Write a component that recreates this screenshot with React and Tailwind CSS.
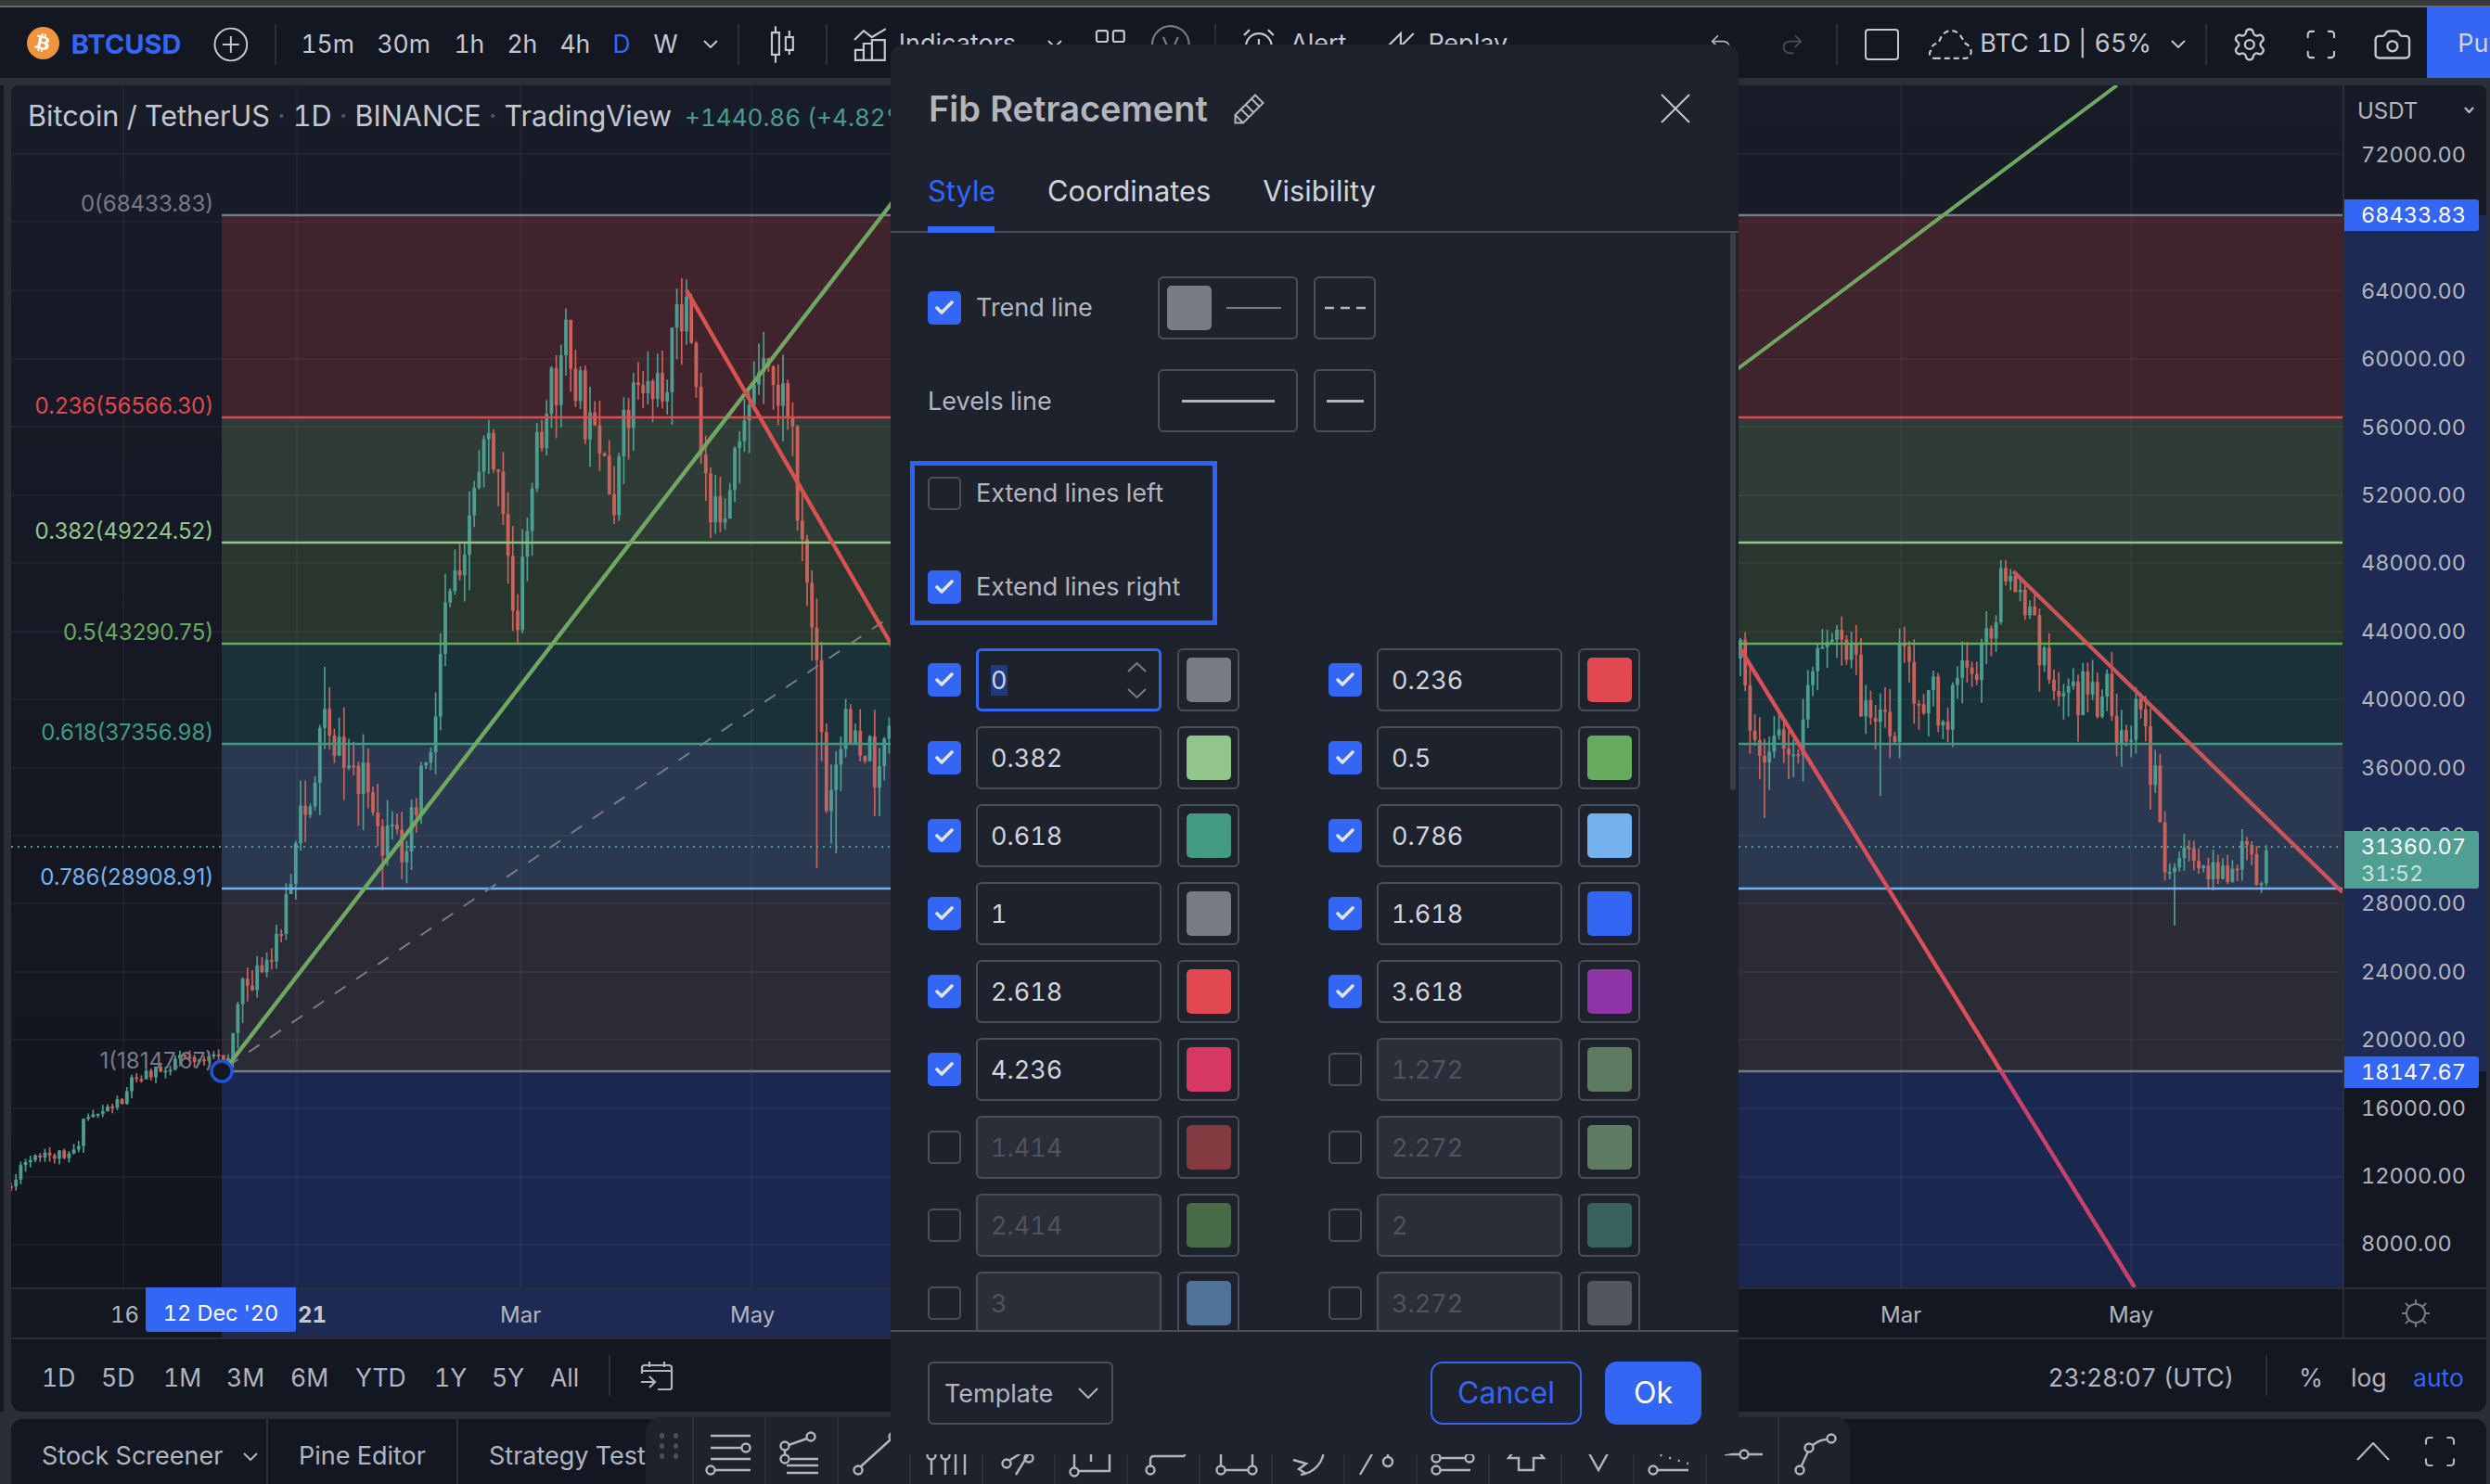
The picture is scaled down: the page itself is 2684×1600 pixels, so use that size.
import React from "react";
import { Settings, Camera, Scan, Undo2, Redo2, Check } from "lucide-react";
import { FaBtc } from "react-icons/fa";

const LEFT = [[12,1279],[28,1253],[61,1245],[83,1237],[92,1206],[132,1185],[144,1159],[178,1154],[193,1135],[227,1143],[245,1141],[257,1080],[269,1054],[291,1049],[300,1002],[312,960],[325,887],[343,814],[349,751],[367,824],[392,824],[404,918],[429,918],[453,835],[471,772],[478,636],[490,615],[511,531],[525,436],[556,676],[580,470],[613,368],[635,470],[659,548],[685,402],[710,428],[739,316],[755,480],[779,599],[804,428],[830,410],[852,445],[864,582],[881,719],[890,890],[916,770],[941,822],[962,805]];
const RIGHT = [[1876,710],[1890,814],[1895,840],[1906,814],[1931,788],[1941,809],[1947,730],[1962,673],[1972,693],[1988,714],[1995,678],[2003,746],[2018,793],[2029,788],[2044,782],[2047,678],[2057,693],[2062,772],[2075,788],[2083,720],[2090,767],[2100,788],[2111,730],[2131,735],[2141,688],[2152,662],[2157,620],[2170,620],[2177,646],[2188,636],[2195,693],[2208,709],[2216,761],[2229,741],[2241,756],[2249,725],[2257,730],[2262,761],[2275,746],[2280,788],[2295,788],[2311,756],[2315,814],[2326,861],[2331,934],[2342,955],[2357,918],[2367,945],[2385,934],[2403,955],[2416,918],[2418,903],[2429,939],[2439,939],[2444,913]];

function makeRandom(seed) {
  let a = seed;
  return () => {
    a = (a + 0x6d2b79f5) | 0;
    let t = Math.imul(a ^ (a >>> 15), 1 | a);
    t = (t + Math.imul(t ^ (t >>> 7), 61 | t)) ^ t;
    return ((t ^ (t >>> 14)) >>> 0) / 4294967296;
  };
}

function makeCandles(points, seed, ampFor, spikes) {
  const rand = makeRandom(seed);
  const out = [];
  let prev = points[0][1];
  let seg = 0;
  for (let x = points[0][0]; x <= points[points.length - 1][0]; x += 5.2) {
    while (seg < points.length - 2 && x > points[seg + 1][0]) seg++;
    const [x0, y0] = points[seg];
    const [x1, y1] = points[seg + 1];
    const y = y0 + ((y1 - y0) * (x - x0)) / (x1 - x0);
    const amp = ampFor(x);
    const close = y + (rand() - 0.5) * amp;
    const top = Math.min(prev, close);
    const bottom = Math.max(prev, close);
    const k = { x, top, bottom, hi: top - rand() * amp * 0.5, lo: bottom + rand() * amp * 0.6, up: close < prev };
    for (const [sx, hi, lo] of spikes) {
      if (Math.abs(sx - x) <= 2.6) {
        if (hi) k.hi = hi;
        if (lo) k.lo = lo;
      }
    }
    out.push(k);
    prev = close;
  }
  return out;
}

const LEFT_CANDLES = makeCandles(LEFT, 11, (x) => (x < 250 ? 14 : x < 320 ? 34 : 66), [[351, 719, 0], [736, 300, 0], [883, 0, 936], [899, 0, 920], [613, 350, 0]]);
const RIGHT_CANDLES = makeCandles(RIGHT, 23, (x) => (x > 2330 ? 30 : x > 2150 && x < 2180 ? 24 : 50), [[2028, 0, 858], [2342, 0, 998], [1900, 0, 882], [2163, 604, 0], [2418, 894, 0]]);

const BANDS = [
  [232, 450, "#3f232d"],
  [450, 585, "#2f3b36"],
  [585, 694, "#29362e"],
  [694, 802, "#1b313a"],
  [802, 958, "#2a3850"],
  [958, 1155, "#2a2b36"],
  [1155, 1388, "#1a2850"],
];
const LEVELS = [
  [232, "#787b86"],
  [450, "#e1484f"],
  [585, "#91c58a"],
  [694, "#67ab5e"],
  [802, "#429a82"],
  [958, "#74b2ef"],
  [1155, "#787b86"],
];
const GRID_Y = [166, 239, 313, 387, 460, 534, 607, 681, 754, 828, 901, 974, 1048, 1121, 1195, 1269, 1342];
const GRID_X = [133, 320, 561, 810, 2049, 2297];

function Chart() {
  return (
    <svg className="absolute inset-0 w-full h-full" viewBox="12 92 2513 1296">
      {BANDS.map(([a, b, c]) => (
        <rect key={a} x="239" y={a} width="2290" height={b - a} fill={c} />
      ))}
      {GRID_Y.map((y) => (
        <line key={y} x1="12" x2="2525" y1={y} y2={y} stroke="#ffffff" strokeOpacity="0.055" strokeWidth="1.6" />
      ))}
      {GRID_X.map((x) => (
        <line key={x} x1={x} x2={x} y1="92" y2="1388" stroke="#ffffff" strokeOpacity="0.055" strokeWidth="1.4" />
      ))}
      {[...LEFT_CANDLES, ...RIGHT_CANDLES].map((k, i) => {
        const c = k.up ? "#4d9e90" : "#c9625a";
        return (
          <g key={i}>
            <line x1={k.x} x2={k.x} y1={k.hi} y2={k.lo} stroke={c} strokeWidth="1.7" />
            <rect x={k.x - 1.9} y={k.top} width="3.8" height={Math.max(k.bottom - k.top, 2)} fill={c} />
          </g>
        );
      })}
      <line x1="12" x2="2525" y1="913" y2="913" stroke="#4d9e90" strokeWidth="2" strokeDasharray="2 5" />
      {LEVELS.map(([y, c]) => (
        <line key={y} x1="239" x2="2525" y1={y} y2={y} stroke={c} strokeWidth="2.4" />
      ))}
      <line x1="245" y1="1150" x2="958" y2="666" stroke="#787b86" strokeWidth="2" strokeDasharray="14 14" />
      <line x1="245" y1="1150" x2="962" y2="218" stroke="#6fa860" strokeWidth="4.4" />
      <line x1="1870" y1="400" x2="2282" y2="92" stroke="#6fa860" strokeWidth="4" />
      <line x1="740" y1="313" x2="962" y2="697" stroke="#d9524f" strokeWidth="4.4" />
      <line x1="1876" y1="700" x2="2157" y2="1155" stroke="#d9505a" strokeWidth="4.4" />
      <line x1="2157" y1="1155" x2="2301" y2="1388" stroke="#c9416b" strokeWidth="4.4" />
      <line x1="2170" y1="616" x2="2525" y2="962" stroke="#c9545a" strokeWidth="4.4" />
      <circle cx="239" cy="1155" r="11" fill="#131722" stroke="#1f55e0" strokeWidth="3.4" />
    </svg>
  );
}

function Chev({ w, h, sw = 2, up = false, className = "", color = "currentColor" }) {
  const d = up ? `M1 ${h - 1}L${w / 2} 1L${w - 1} ${h - 1}` : `M1 1L${w / 2} ${h - 1}L${w - 1} 1`;
  return (
    <svg className={className} width={w} height={h} viewBox={`0 0 ${w} ${h}`} fill="none" stroke={color} strokeWidth={sw}>
      <path d={d} />
    </svg>
  );
}

const FIB_LABELS = [
  ["0(68433.83)", "top-[118px]", "text-[#787b86]"],
  ["0.236(56566.30)", "top-[336px]", "text-[#e1484f]"],
  ["0.382(49224.52)", "top-[471px]", "text-[#91c58a]"],
  ["0.5(43290.75)", "top-[580px]", "text-[#67ab5e]"],
  ["0.618(37356.98)", "top-[688px]", "text-[#429a82]"],
  ["0.786(28908.91)", "top-[844px]", "text-[#74b2ef]"],
  ["1(18147.67)", "top-[1042px]", "text-[#787b86]"],
];

const PRICES = ["72000.00", "", "64000.00", "60000.00", "56000.00", "52000.00", "48000.00", "44000.00", "40000.00", "36000.00", "32000.00", "28000.00", "24000.00", "20000.00", "16000.00", "12000.00", "8000.00"];

function PriceAxis() {
  return (
    <div className="relative w-[155px] shrink-0 border-l-2 border-[#2a2e39] bg-[#131722] pt-[38px] rounded-tr-lg overflow-hidden">
      <div className="absolute inset-x-0 top-0 h-[140px] bg-[#171b27]" />
      <div className="absolute inset-x-0 top-[140px] h-[923px] bg-[#1c2a54]" />
      <div className="absolute left-[14px] top-[12px] flex w-[126px] items-center justify-between text-[24px] leading-[32px] text-[#b2b5be]">
        <span>USDT</span>
        <Chev w={11} h={7} sw={2.4} className="mb-[4px]" />
      </div>
      {PRICES.map((p, i) => (
        <div key={i} className="relative flex h-[73.4px] items-center pl-[18px] text-[23.5px] text-[#b2b5be]">
          {p}
        </div>
      ))}
      <div className="absolute left-[-2px] top-[123px] flex h-[34px] w-[147px] items-center rounded-r-[3px] bg-[#3366f5] pl-[20px] text-[23.5px] text-white">68433.83</div>
      <div className="absolute left-[-2px] top-[804px] flex h-[62px] w-[147px] flex-col justify-center rounded-r-[3px] bg-[#4fa092] pl-[20px] text-[23.5px] leading-[29px] text-white">
        <span>31360.07</span>
        <span className="text-[#c9e0da]">31:52</span>
      </div>
      <div className="absolute left-[-2px] top-[1047px] flex h-[34px] w-[147px] items-center rounded-r-[3px] bg-[#3366f5] pl-[20px] text-[23.5px] text-white">18147.67</div>
    </div>
  );
}

function SunIcon() {
  return (
    <svg width="32" height="32" viewBox="0 0 32 32" fill="none" stroke="#787b86" strokeWidth="2">
      <circle cx="16" cy="16" r="10" />
      <path d="M16 1v5M16 26v5M1 16h5M26 16h5M5 5l3.5 3.5M23.5 23.5L27 27M5 27l3.5-3.5M23.5 8.5L27 5" />
    </svg>
  );
}

function TimeAxis() {
  return (
    <div className="flex h-[56px] border-y-2 border-[#2a2e39] bg-[#131722] text-[24px] text-[#b2b5be]">
      <div className="relative flex-1">
        <div className="absolute left-[227px] top-0 h-full w-[800px] bg-[#1c2a54]" />
        <span className="absolute left-[107px] top-[12px] leading-[32px]">16</span>
        <div className="absolute left-[145px] top-[-2px] flex h-[48px] w-[162px] items-center justify-center rounded-b-[3px] bg-[#3366f5] pt-[8px] text-[23.5px] text-white">12 Dec '20</div>
        <span className="absolute left-[309px] top-[12px] font-bold leading-[32px] text-[#c4c7cf]">21</span>
        <span className="absolute left-[527px] top-[12px] leading-[32px]">Mar</span>
        <span className="absolute left-[775px] top-[12px] leading-[32px]">May</span>
        <span className="absolute left-[2015px] top-[12px] leading-[32px]">Mar</span>
        <span className="absolute left-[2261px] top-[12px] leading-[32px]">May</span>
      </div>
      <div className="flex w-[155px] items-center justify-center border-l-2 border-[#2a2e39]">
        <SunIcon />
      </div>
    </div>
  );
}

function RangeBar() {
  return (
    <div className="flex h-[78px] items-center rounded-b-xl bg-[#131722] pt-[5px] text-[26.5px] text-[#b2b5be]">
      <span className="ml-[33px] w-[36px]">1D</span>
      <span className="ml-[28px] w-[37px]">5D</span>
      <span className="ml-[30px] w-[39px]">1M</span>
      <span className="ml-[29px] w-[40px]">3M</span>
      <span className="ml-[29px] w-[41px]">6M</span>
      <span className="ml-[29px] w-[54px]">YTD</span>
      <span className="ml-[31px] w-[32px]">1Y</span>
      <span className="ml-[30px] w-[34px]">5Y</span>
      <span className="ml-[29px] w-[30px]">All</span>
      <div className="ml-[33px] mb-[5px] h-[44px] w-[2px] bg-[#2a2e39]" />
      <svg className="ml-[32px] mb-[5px]" width="36" height="32" viewBox="0 0 36 32" fill="none" stroke="#b2b5be" strokeWidth="2.2">
        <path d="M2 14V8a3 3 0 0 1 3-3h26a3 3 0 0 1 3 3v21a2 2 0 0 1-2 2H19M2 11h32M10 1v6M26 1v6M1 23h15M10 17l6 6-6 6" />
      </svg>
      <span className="ml-auto w-[203px] whitespace-nowrap text-right">23:28:07 (UTC)</span>
      <div className="ml-[34px] mb-[5px] h-[44px] w-[2px] bg-[#2a2e39]" />
      <span className="ml-[34px] w-[26px]">%</span>
      <span className="ml-[30px] w-[38px]">log</span>
      <span className="ml-[29px] mr-[23px] w-[56px] text-[#3366f5]">auto</span>
    </div>
  );
}

const stroke = { fill: "none", stroke: "#b2b5be", strokeWidth: 2.4 };
const DRAW_ICONS = [
  <g {...stroke}><path d="M18 20h43M18 33h33M18 45h43M23 57h38" /><circle cx="56" cy="33" r="4.5" /><circle cx="18" cy="57" r="4.5" /></g>,
  <g {...stroke}><path d="M44 23L24 30M20 35v6M26 45h30M22 52h34M22 60h34" /><circle cx="48" cy="21" r="4.5" /><circle cx="20" cy="31" r="4.5" /><circle cx="20" cy="45" r="4.5" /></g>,
  <g {...stroke}><path d="M24 53L56 24" /><circle cx="21" cy="57" r="4.5" /><circle cx="59" cy="21" r="4.5" /></g>,
  <g {...stroke}><path d="M22 46v16M37 46v16M48 38v24M58 38v24" /><circle cx="22" cy="41" r="4.5" /><circle cx="37" cy="41" r="4.5" /></g>,
  <g {...stroke}><path d="M35 62L57 26M29 46l16-10" /><circle cx="25" cy="50" r="4.5" /><circle cx="49" cy="44" r="4.5" /></g>,
  <g {...stroke}><path d="M24 58h34V28H20v26M38 28v20M32 34h14" /><circle cx="20" cy="59" r="4.5" /></g>,
  <g {...stroke}><path d="M24 52v-6q0-4 4-4h33M61 34v8" /><circle cx="24" cy="57" r="4.5" /></g>,
  <g {...stroke}><path d="M22 30v22M56 30v22M27 57h24" /><circle cx="22" cy="57" r="4.5" /><circle cx="56" cy="57" r="4.5" /></g>,
  <g {...stroke}><path d="M55 34c0 14-10 26-25 28M22 46l14 4-8 6 8 5" /></g>,
  <g {...stroke}><path d="M16 62L30 38M46 43V26" /><circle cx="46" cy="48" r="5" /></g>,
  <g {...stroke}><path d="M25 44h26M25 57h32" /><circle cx="20" cy="44" r="4.5" /><circle cx="56" cy="44" r="4.5" /><circle cx="20" cy="57" r="4.5" /></g>,
  <path {...stroke} d="M39 20L58 44H47v13H31V44H20z" />,
  <path {...stroke} d="M24 30L39 57L54 30" />,
  <g {...stroke}><path d="M25 57h33" /><path d="M18 38l40 12" strokeDasharray="2 8" /><circle cx="20" cy="57" r="4.5" /></g>,
  <g {...stroke}><path d="M19 40h17M44 40h16" /><circle cx="40" cy="40" r="4.5" /></g>,
  <g {...stroke}><path d="M24 52l7-15M36 30q8-6 15-6" /><circle cx="22" cy="57" r="4.5" /><circle cx="32" cy="33" r="4.5" /><circle cx="56" cy="23" r="4.5" /></g>,
];

function DrawToolbar() {
  return (
    <div className="absolute left-[696px] top-[1528px] flex h-[72px] w-[1298px] rounded-t-2xl bg-[#1e222d]">
      <div className="grid h-full w-[50px] grid-cols-2 content-center justify-center gap-x-[10px] gap-y-[5px] px-[15px] pb-[10px]">
        {[0, 1, 2, 3, 4, 5].map((d) => (
          <span key={d} className="h-[6px] w-[5px] rounded-full bg-[#4a4e59]" />
        ))}
      </div>
      {DRAW_ICONS.map((icon, i) => (
        <div key={i} className="h-full w-[78px] border-l-2 border-[#2a2e39]">
          <svg width="78" height="72" viewBox="0 0 78 72">{icon}</svg>
        </div>
      ))}
    </div>
  );
}

function BottomPanel() {
  return (
    <div className="mt-2 flex h-[70px] rounded-t-xl bg-[#131722] text-[27px] text-[#b2b5be]">
      <div className="flex w-[277px] items-center border-r-2 border-[#2a2e39] pl-[33px] pt-[10px]">
        <span className="w-[200px] whitespace-nowrap">Stock Screener</span>
        <Chev w={16} h={9} className="ml-[17px]" />
      </div>
      <div className="flex w-[205px] items-center border-r-2 border-[#2a2e39] pl-[33px] pt-[10px]">
        <span className="whitespace-nowrap">Pine Editor</span>
      </div>
      <div className="flex w-[214px] items-center overflow-hidden pl-[33px] pt-[10px]">
        <span className="whitespace-nowrap">Strategy Test</span>
      </div>
      <div className="ml-auto flex items-center pr-[30px]">
        <Chev w={36} h={20} sw={2.2} up />
        <Scan className="ml-[34px] text-[#b2b5be]" size={40} strokeWidth={1.3} />
      </div>
    </div>
  );
}

function Box({ className = "", children }) {
  return <div className={`flex h-[68px] items-center rounded-[6px] border-2 border-[#4a4e59] ${className}`}>{children}</div>;
}

function CheckBox({ on }) {
  return on ? (
    <span className="flex h-[36px] w-[36px] shrink-0 items-center justify-center rounded-[5px] bg-[#3366f5] text-[#dfe2e8]">
      <Check size={24} strokeWidth={3.6} />
    </span>
  ) : (
    <span className="h-[36px] w-[36px] shrink-0 rounded-[5px] border-2 border-[#4a4e59]" />
  );
}

const ROWS = [
  ["0", "#787b86", true, true],
  ["0.236", "#e1484f", true],
  ["0.382", "#91c58a", true],
  ["0.5", "#67ab5e", true],
  ["0.618", "#429a82", true],
  ["0.786", "#74b2ef", true],
  ["1", "#787b86", true],
  ["1.618", "#3366f5", true],
  ["2.618", "#e1484f", true],
  ["3.618", "#8f34a6", true],
  ["4.236", "#d63763", true],
  ["1.272", "#5d7b60", false],
  ["1.414", "#833a41", false],
  ["2.272", "#5d7b60", false],
  ["2.414", "#4a6b47", false],
  ["2", "#37625e", false],
  ["3", "#507299", false],
  ["3.272", "#53565f", false],
];

function LevelRow({ value, color, on, focus }) {
  return (
    <div className="flex items-center">
      <CheckBox on={on} />
      <div
        className={
          focus
            ? "relative ml-[16px] flex h-[68px] w-[200px] items-center rounded-[6px] border-[3px] border-[#3366f5] pl-[13px] text-[27px] text-[#d1d4dc]"
            : on
              ? "ml-[16px] flex h-[68px] w-[200px] items-center rounded-[6px] border-2 border-[#4a4e59] pl-[14px] text-[27px] text-[#d1d4dc]"
              : "ml-[16px] flex h-[68px] w-[200px] items-center rounded-[6px] border-2 border-[#4a4e59] bg-[#2a2e39] pl-[14px] text-[27px] text-[#50535e]"
        }
      >
        <span className={focus ? "bg-[#1f3a80] leading-[33px]" : "leading-[33px]"}>{value}</span>
        {focus && (
          <div className="absolute right-[13px] top-[12px] flex flex-col gap-[17px] text-[#787b86]">
            <Chev w={21} h={11} up />
            <Chev w={21} h={11} />
          </div>
        )}
      </div>
      <Box className="ml-[17px] w-[67px] justify-center">
        <span className="h-[48px] w-[48px] rounded-[5px]" style={{ backgroundColor: color }} />
      </Box>
    </div>
  );
}

function Dialog() {
  return (
    <div className="absolute left-[960px] top-[48px] flex h-[1520px] w-[914px] flex-col overflow-hidden rounded-[14px] bg-[#1e222d] text-[27px] text-[#b2b5be]">
      <div className="flex h-[138px] shrink-0 items-center pl-[41px] pr-[52px]">
        <span className="whitespace-nowrap text-[38px] font-semibold text-[#b2b5be]">Fib Retracement</span>
        <svg className="ml-[28px]" width="34" height="34" viewBox="0 0 34 34" fill="none" stroke="#b2b5be" strokeWidth="2">
          <path d="M1.5 32.5V24L23 2.5l8.5 8.5L10 32.5zM1.5 24l8.5 8.5M19 6.5l8.5 8.5M8 18l8 8M13 13l8 8" />
        </svg>
        <svg className="ml-auto" width="32" height="32" viewBox="0 0 32 32" fill="none" stroke="#c4c7cf" strokeWidth="2">
          <path d="M1 1l30 30M31 1L1 31" />
        </svg>
      </div>
      <div className="flex h-[65px] shrink-0 border-b-2 border-[#4a4e59] pl-[40px] text-[30.8px] leading-[40px] text-[#d1d4dc]">
        <div className="h-[65px] w-[72px] whitespace-nowrap border-b-[7px] border-[#3366f5] text-[#3366f5]">Style</div>
        <div className="ml-[57px] whitespace-nowrap">Coordinates</div>
        <div className="ml-[56px] whitespace-nowrap">Visibility</div>
      </div>
      <div className="relative min-h-0 flex-1 overflow-hidden pl-[40px] pt-[47px]">
        <div className="absolute right-[3px] top-0 h-[601px] w-[6px] rounded-full bg-[#3a3e49]" />
        <div className="flex h-[68px] items-center">
          <CheckBox on />
          <span className="ml-[16px] w-[196px] text-[27px]">Trend line</span>
          <Box className="w-[151px] pl-[8px]">
            <span className="h-[48px] w-[48px] rounded-[5px] bg-[#787b86]" />
            <span className="ml-[16px] h-[2px] w-[59px] bg-[#787b86]" />
          </Box>
          <Box className="ml-[17px] w-[67px] justify-center">
            <svg width="44" height="4" viewBox="0 0 44 4"><path d="M0 2h44" stroke="#b2b5be" strokeWidth="2.4" strokeDasharray="10 7" /></svg>
          </Box>
        </div>
        <div className="mt-[32px] flex h-[68px] items-center">
          <span className="w-[248px] pt-[3px] text-[27px]">Levels line</span>
          <Box className="w-[151px] justify-center">
            <span className="h-[3px] w-[100px] bg-[#b2b5be]" />
          </Box>
          <Box className="ml-[17px] w-[67px] justify-center">
            <span className="h-[3px] w-[40px] bg-[#b2b5be]" />
          </Box>
        </div>
        <div className="ml-[-19px] mt-[31px] flex h-[177px] w-[331px] flex-col gap-[65px] border-[5px] border-[#2b63f6] pl-[14px] pt-[12px]">
          <div className="flex h-[36px] items-center">
            <CheckBox on={false} />
            <span className="ml-[16px] whitespace-nowrap">Extend lines left</span>
          </div>
          <div className="flex h-[36px] items-center">
            <CheckBox on />
            <span className="ml-[16px] whitespace-nowrap">Extend lines right</span>
          </div>
        </div>
        <div className="mt-[25px] grid grid-cols-[432px_1fr] gap-y-4">
          {ROWS.map(([v, c, on, focus]) => (
            <LevelRow key={v} value={v} color={c} on={on} focus={focus} />
          ))}
        </div>
      </div>
      <div className="flex h-[134px] shrink-0 items-start border-t-2 border-[#4a4e59] px-[40px] pt-[32px]">
        <Box className="w-[200px] pl-[16px]">
          <span className="pt-[2px] text-[27px]">Template</span>
          <Chev w={22} h={12} sw={2} className="ml-auto mr-[14px]" />
        </Box>
        <button className="ml-auto flex h-[68px] w-[163px] items-center justify-center rounded-[13px] border-[2.5px] border-[#3366f5] text-[32px] text-[#3366f5]">Cancel</button>
        <button className="ml-[25px] flex h-[68px] w-[104px] items-center justify-center rounded-[13px] bg-[#3366f5] text-[32px] text-white">Ok</button>
      </div>
    </div>
  );
}

function TopBar() {
  return (
    <div className="flex h-[76px] shrink-0 items-center bg-[#131722] pt-[3px] text-[27px] text-[#c4c7cf]">
      <div className="ml-[29px] mb-[3px] flex h-[35px] w-[35px] items-center justify-center rounded-full bg-[#f0953c] text-white">
        <FaBtc size={20} className="rotate-[14deg]" />
      </div>
      <span className="ml-[13px] w-[118px] whitespace-nowrap text-[29px] font-bold text-[#3366f5]">BTCUSD</span>
      <svg className="ml-[35px]" width="38" height="38" viewBox="0 0 38 38" fill="none" stroke="#c4c7cf" strokeWidth="2">
        <circle cx="19" cy="19" r="17.5" />
        <path d="M19 10v18M10 19h18" />
      </svg>
      <div className="ml-[29px] h-[44px] w-[2px] bg-[#2a2e39]" />
      <span className="ml-[26px] w-[55px] whitespace-nowrap text-[26.5px]">15m</span>
      <span className="ml-[27px] w-[55px] whitespace-nowrap text-[26.5px]">30m</span>
      <span className="ml-[28px] w-[30px] text-[26.5px]">1h</span>
      <span className="ml-[27px] w-[30px] text-[26.5px]">2h</span>
      <span className="ml-[27px] w-[30px] text-[26.5px]">4h</span>
      <span className="ml-[27px] w-[17px] text-[26.5px] text-[#3366f5]">D</span>
      <span className="ml-[27px] w-[25px] text-[26.5px]">W</span>
      <Chev w={16} h={9} className="ml-[29px]" />
      <div className="ml-[21px] h-[44px] w-[2px] bg-[#2a2e39]" />
      <svg className="ml-[33px]" width="28" height="40" viewBox="0 0 28 40" fill="none" stroke="#c4c7cf" strokeWidth="2.2">
        <path d="M6 0v40M21 5v26" />
        <rect x="2" y="7" width="8" height="24" fill="#131722" />
        <rect x="17" y="12" width="8" height="14" fill="#131722" />
      </svg>
      <div className="ml-[32px] h-[44px] w-[2px] bg-[#2a2e39]" />
      <svg className="ml-[28px]" width="36" height="36" viewBox="0 0 36 36" fill="none" stroke="#c4c7cf" strokeWidth="2.2">
        <path d="M1 13L11 3l9 7L35 1M2 35V24h9v11zM11 35V17h9v18M20 35V13h14v22zM1 35h34" />
      </svg>
      <span className="ml-[13px] w-[127px] whitespace-nowrap">Indicators</span>
      <Chev w={16} h={9} className="ml-[34px]" />
      <svg className="ml-[35px]" width="34" height="34" viewBox="0 0 34 34" fill="none" stroke="#c4c7cf" strokeWidth="2.2">
        <rect x="2" y="2" width="12" height="12" rx="2" />
        <rect x="20" y="2" width="12" height="12" rx="2" />
        <rect x="2" y="20" width="12" height="12" rx="2" />
        <rect x="20" y="20" width="12" height="12" rx="2" />
      </svg>
      <svg className="ml-[26px]" width="44" height="44" viewBox="0 0 44 44" fill="none" stroke="#787b86" strokeWidth="2.2">
        <circle cx="22" cy="22" r="20" />
        <path d="M14 14l8 18 8-18" />
      </svg>
      <div className="ml-[26px] h-[44px] w-[2px] bg-[#2a2e39]" />
      <svg className="ml-[28px]" width="36" height="36" viewBox="0 0 36 36" fill="none" stroke="#c4c7cf" strokeWidth="2.2">
        <path d="M2 8l6-6M34 8l-6-6" />
        <circle cx="18" cy="20" r="14" />
        <path d="M18 12v8l5 4" />
      </svg>
      <span className="ml-[16px] w-[63px] whitespace-nowrap">Alert</span>
      <svg className="ml-[40px]" width="32" height="32" viewBox="0 0 32 32" fill="none" stroke="#c4c7cf" strokeWidth="2.2">
        <path d="M16 4L2 18l14 12V4zM30 4L16 18l14 12" />
      </svg>
      <span className="ml-[14px] w-[85px] whitespace-nowrap">Replay</span>
      <Undo2 className="ml-[217px] text-[#b2b5be]" size={28} strokeWidth={1.5} />
      <Redo2 className="ml-[49px] text-[#4a4e59]" size={28} strokeWidth={1.5} />
      <div className="ml-[33px] h-[44px] w-[2px] bg-[#2a2e39]" />
      <span className="ml-[29px] h-[34px] w-[37px] rounded-[4px] border-2 border-[#c4c7cf]" />
      <svg className="ml-[32px]" width="48" height="34" viewBox="0 0 48 34" fill="none" stroke="#c4c7cf" strokeWidth="2.2" strokeDasharray="6 4">
        <path d="M10 32H6a5 5 0 0 1-3-9c0-5 3-7 8-8 2-8 7-13 13-13 7 0 12 5 14 13 5 2 8 5 8 10 0 4-3 7-6 7z" />
      </svg>
      <span className="ml-[8px] w-[180px] whitespace-nowrap [word-spacing:1px]">BTC 1D | 65%</span>
      <Chev w={16} h={9} className="ml-[26px]" />
      <div className="ml-[21px] h-[44px] w-[2px] bg-[#2a2e39]" />
      <Settings className="ml-[26px]" size={40} strokeWidth={1.4} />
      <Scan className="ml-[38px]" size={38} strokeWidth={1.3} />
      <Camera className="ml-[36px]" size={44} strokeWidth={1.3} />
      <div className="ml-[16px] -mt-[3px] flex h-[76px] w-[68px] items-center bg-[#3366f5] pl-[33px] pt-[3px] text-[#d1d4dc]">
        <span>Pu</span>
      </div>
    </div>
  );
}

export default function App() {
  return (
    <div className="relative h-[1600px] w-[2684px] overflow-hidden bg-[#2a2e39] tabular-nums [font-family:Inter,sans-serif]">
      <div className="h-[6px] bg-[#383838]" />
      <div className="h-[2px] bg-[#6a6a6a]" />
      <TopBar />
      <div className="mt-2 flex">
        <div className="h-[1430px] w-[4px] bg-[#131722]" />
        <div className="ml-2 mr-1 flex w-[2668px] flex-col">
          <div className="flex h-[1296px]">
            <div className="relative flex-1 overflow-hidden rounded-tl-lg bg-linear-to-b from-[#181c29] to-[#12151e]">
              <Chart />
              <div className="absolute left-[18px] top-[13px] flex items-baseline whitespace-nowrap text-[30.6px] leading-[40px] text-[#c4c7cf]">
                <span>Bitcoin / TetherUS</span>
                <span className="mx-[8px] text-[#50535e]">·</span>
                <span>1D</span>
                <span className="mx-[8px] text-[#50535e]">·</span>
                <span>BINANCE</span>
                <span className="mx-[8px] text-[#50535e]">·</span>
                <span>TradingView</span>
                <span className="ml-[14px] text-[26px] text-[#4a9d8d]">+1440.86 (+4.82%)</span>
              </div>
              {FIB_LABELS.map(([t, top, color]) => (
                <span key={t} className={`absolute right-[2295px] ${top} whitespace-nowrap text-[24px] leading-[20px] [font-variant-numeric:normal] ${color}`}>
                  {t}
                </span>
              ))}
            </div>
            <PriceAxis />
          </div>
          <TimeAxis />
          <RangeBar />
          <BottomPanel />
        </div>
      </div>
      <DrawToolbar />
      <Dialog />
    </div>
  );
}
